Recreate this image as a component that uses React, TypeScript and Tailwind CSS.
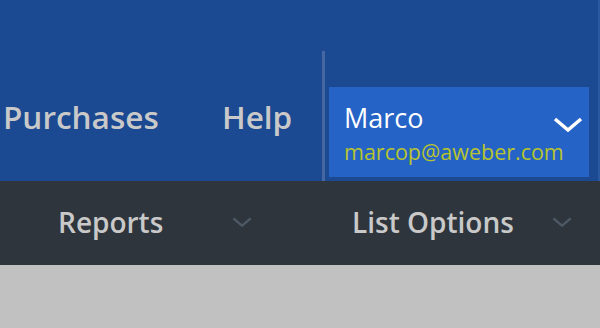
import React from "react";

const Chevron = ({ className }: { className?: string }) => (
  <svg viewBox="0 0 30 15" className={className} fill="none">
    <polyline
      points="2,2 15,13 28,2"
      stroke="currentColor"
      strokeWidth="3.5"
      strokeLinejoin="miter"
    />
  </svg>
);

const SubItem = ({ label, width }: { label: string; width: string }) => (
  <div className={`flex items-center justify-between ${width}`}>
    <span className="text-[28px] leading-none font-semibold text-[#c9c9c9]">{label}</span>
    <Chevron className="shrink-0 w-[20px] h-[10px] text-[#4d5965]" />
  </div>
);

const App = () => {
  return (
    <div
      className="w-[600px] h-[328px] overflow-hidden bg-[#c1c1c1]"
      style={{ fontFamily: '"Open Sans", "Noto Sans", sans-serif' }}
    >
      <header className="h-[181px] bg-[#1b4a92] border-r-2 border-[#2c5aa2] flex items-end justify-end">
        <div className="flex items-end h-[130px] pr-[9px]">
          <a className="w-[219px] h-[90px] mb-[4px] pt-[14px] text-[31.5px] leading-none font-semibold text-[#c9c9c9] whitespace-nowrap -ml-[2px]">
            Purchases
          </a>
          <a className="w-[100px] h-[90px] mb-[4px] pt-[14px] text-[31.5px] leading-none font-semibold text-[#c9c9c9]">
            Help
          </a>
          <div className="w-[3px] h-[130px] bg-[#4568a3]" />
          <div className="ml-[4px] mb-[4px] w-[260px] h-[90px] bg-[#2563c6] relative flex flex-col pl-[15px] pt-[17px] cursor-pointer">
            <span className="text-[27px] leading-none text-white">Marco</span>
            <span className="mt-[10px] text-[21.5px] leading-none text-[#b8c42e] whitespace-nowrap">
              marcop@aweber.com
            </span>
            <Chevron className="absolute right-[6px] top-[30px] w-[30px] h-[15px] text-white" />
          </div>
        </div>
      </header>
      <nav className="h-[84px] bg-[#2e353d] flex items-center pl-[58px] pb-[2px] gap-[100px]">
        <SubItem label="Reports" width="w-[194px]" />
        <SubItem label="List Options" width="w-[220px]" />
      </nav>
    </div>
  );
};

export default App;
